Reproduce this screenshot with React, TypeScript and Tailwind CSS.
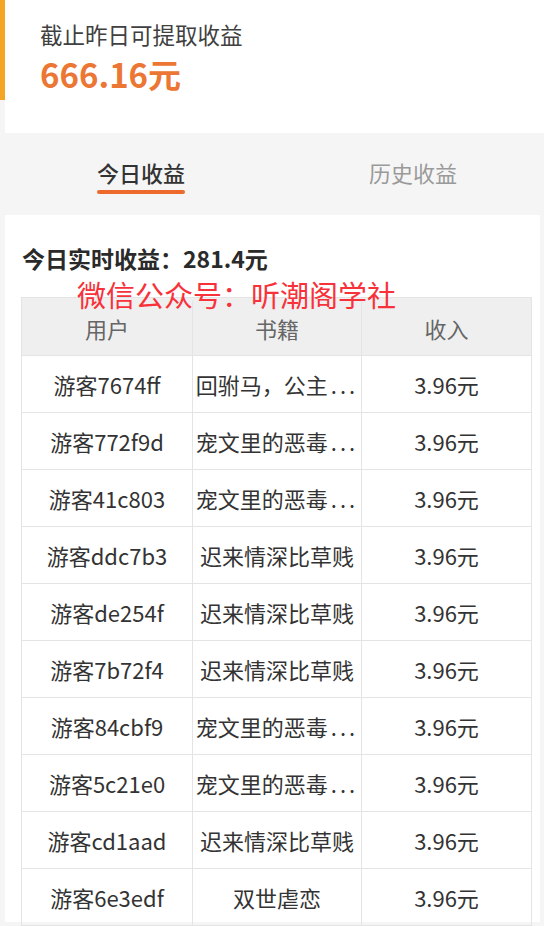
const rows = [
  { user: "游客7674ff", book: "回驸马，公主", cut: true },
  { user: "游客772f9d", book: "宠文里的恶毒", cut: true },
  { user: "游客41c803", book: "宠文里的恶毒", cut: true },
  { user: "游客ddc7b3", book: "迟来情深比草贱", cut: false },
  { user: "游客de254f", book: "迟来情深比草贱", cut: false },
  { user: "游客7b72f4", book: "迟来情深比草贱", cut: false },
  { user: "游客84cbf9", book: "宠文里的恶毒", cut: true },
  { user: "游客5c21e0", book: "宠文里的恶毒", cut: true },
  { user: "游客cd1aad", book: "迟来情深比草贱", cut: false },
  { user: "游客6e3edf", book: "双世虐恋", cut: false },
];

export default function App() {
  return (
    <div
      className="w-[544px] h-[926px] overflow-hidden bg-[#f5f5f5] text-[#333]"
      style={{ fontFamily: '"Noto Sans CJK SC", "Noto Sans", sans-serif' }}
    >
      {/* balance card */}
      <div className="flex">
        <div className="w-[5px] h-[100px] bg-[#f5a524] shrink-0" />
        <div className="flex-1 h-[133px] bg-white pl-[35px] pt-[19px]">
          <div className="text-[22.5px] leading-[30px] text-[#404040]">截止昨日可提取收益</div>
          <div className="mt-[5px] text-[33px] leading-[40px] font-bold text-[#ec7634]">666.16元</div>
        </div>
      </div>

      {/* tabs */}
      <div className="grid grid-cols-2 w-[544px] ml-[5px] h-[82px] pt-[24px]">
        <div className="flex flex-col items-center">
          <div className="text-[22px] leading-[30px] font-medium text-[#333]">今日收益</div>
          <div className="mt-[3px] w-[88px] h-[4px] rounded-full bg-[#ec6a2c]" />
        </div>
        <div className="flex flex-col items-center">
          <div className="text-[22px] leading-[30px] text-[#9a9a9a]">历史收益</div>
        </div>
      </div>

      {/* today list */}
      <div className="relative ml-[5px] w-[535px] h-[707px] bg-white pt-[28px]">
        <div className="pl-[17px] text-[23px] leading-[30px] font-bold text-[#2a2a2a]">今日实时收益：281.4元</div>

        <div className="mt-[24px] ml-[16px] w-[511px] border border-[#e4e4e4]">
          <div className="grid grid-cols-[171px_169px_1fr] h-[57px] bg-[#efefef] text-[#666] text-[22px] leading-none pt-[3px]">
            <div className="flex items-center justify-center border-r border-[#e4e4e4]">用户</div>
            <div className="flex items-center justify-center border-r border-[#e4e4e4]">书籍</div>
            <div className="flex items-center justify-center">收入</div>
          </div>
          {rows.map((r, i) => (
            <div
              key={i}
              className="grid grid-cols-[171px_169px_1fr] h-[57px] border-t border-[#e4e4e4] text-[22px] text-[#333]"
            >
              <div className="flex items-center justify-center border-r border-[#e4e4e4] whitespace-nowrap">{r.user}</div>
              <div className="flex items-center justify-center border-r border-[#e4e4e4] whitespace-nowrap overflow-hidden">
                {r.book}
                {r.cut && <span className="ml-[3px] tracking-[3px]">...</span>}
              </div>
              <div className="flex items-center justify-center whitespace-nowrap">3.96元</div>
            </div>
          ))}
        </div>

        {/* watermark */}
        <div className="absolute left-[72px] top-[67px] text-[29px] leading-[24px] text-[#f8323a] whitespace-nowrap">
          微信公众号：听潮阁学社
        </div>
      </div>
    </div>
  );
}
